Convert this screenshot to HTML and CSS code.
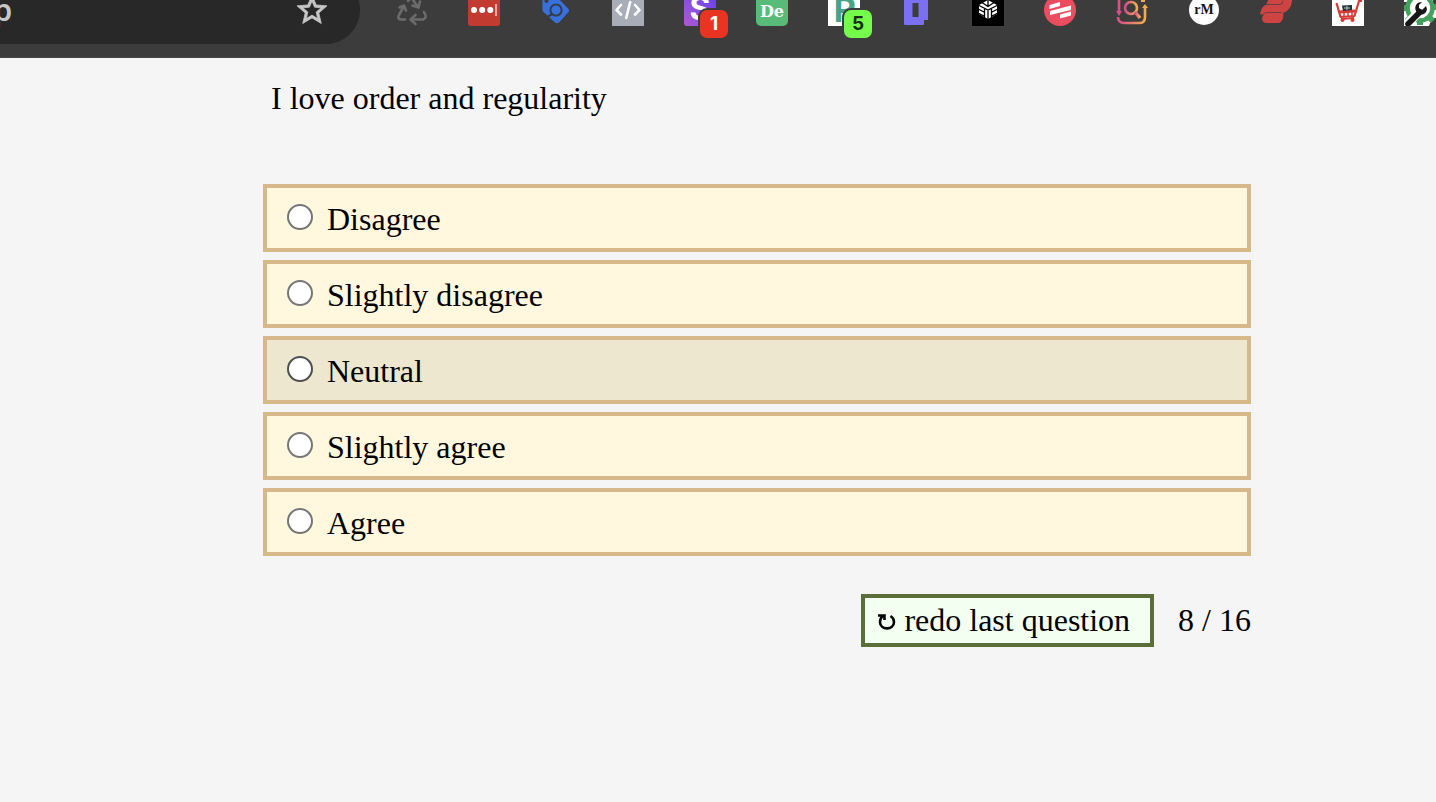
FILE: index.html
```html
<!DOCTYPE html>
<html lang="en">
<head>
<meta charset="utf-8">
<title>Questionnaire</title>
<link rel="stylesheet" href="styles.css">
</head>
<body>
<header class="toolbar">
  <div class="omnibox">
    <input class="address" type="text" value="p" aria-label="Address">
    <button class="bookmark" type="button" aria-label="Bookmark">
      <svg width="36" height="28" viewBox="0 8 36 28"><path transform="scale(1.5)" fill="#c7c7c7" stroke="#c7c7c7" stroke-width=".5" d="M22 9.24l-7.19-.62L12 2 9.19 8.63 2 9.24l5.46 4.73L5.82 21 12 17.27 18.18 21l-1.63-7.03L22 9.24zM12 15.4l-3.76 2.27 1-4.28-3.32-2.88 4.38-.38L12 6.1l1.71 4.04 4.38.38-3.32 2.88 1 4.28L12 15.4z"/></svg>
    </button>
  </div>
  <nav class="extensions" aria-label="Extensions">
    <button class="ext" type="button" aria-label="Recycle">
      <svg viewBox="0 6 32 26"><g fill="none" stroke="#6b6b6b" stroke-width="2.600" stroke-linejoin="round" stroke-linecap="round"><path d="M9 25.500H5Q1 25 3 21l5-9M3.500 13.500L8 11.500l2 5"/><path d="M15.500 25.500H27Q31 24 29 20l-1-2M19.500 21l-5 4.500 5 4.500"/><path d="M12 7l3-4 7 10M16.500 11.500l6 2 1.500-6"/></g></svg>
    </button>
    <button class="ext" type="button" aria-label="Passwords">
      <svg viewBox="0 6 32 26"><rect width="32" height="32" rx="3" fill="#c23b31"/><g fill="#fff"><circle cx="6" cy="16" r="3"/><circle cx="14.200" cy="16" r="3"/><circle cx="22.300" cy="16" r="3"/></g><path fill="#eba7a2" d="M27 10h2v12h-2z"/></svg>
    </button>
    <button class="ext" type="button" aria-label="Tags">
      <svg viewBox="0 6 32 26"><path fill="#3871dc" d="M3 2h13l12.500 13q1 2 0 3L19 28.500q-2 1.500-4 0L2.500 17V3z"/><circle cx="6.500" cy="7" r="2" fill="#3c3c3c"/><circle cx="16" cy="16" r="5.600" fill="none" stroke="#343d4b" stroke-width="2"/><path stroke="#343d4b" stroke-width="2.200" d="M12 20l-4 2.500"/></svg>
    </button>
    <button class="ext" type="button" aria-label="Code">
      <svg viewBox="0 6 32 26"><path fill="#a9adb8" d="M0 0h32v32H0z"/><path fill="none" stroke="#fff" stroke-width="2.600" stroke-linecap="round" stroke-linejoin="round" d="M9 11l-4.500 5L9 20.500M23 11l4.500 5-4.500 4.500M18.200 8l-4 16"/></svg>
    </button>
    <button class="ext" type="button" aria-label="S, 1 notification">
      <svg viewBox="0 6 32 26"><defs><linearGradient id="violet" x1="0" y1="1" x2="1" y2="0"><stop stop-color="#ae59cf"/><stop offset="1" stop-color="#6541ef"/></linearGradient></defs><rect width="32" height="32" rx="3" fill="url(#violet)"/><text class="glyph-s" x="16" y="26" text-anchor="middle">S</text></svg>
      <span class="badge badge-red">1</span>
    </button>
    <button class="ext" type="button" aria-label="De">
      <svg viewBox="0 6 32 26"><rect width="32" height="32" rx="5" fill="#58bb78"/><text class="glyph-de" x="16" y="23" text-anchor="middle">De</text></svg>
    </button>
    <button class="ext" type="button" aria-label="R, 5 notifications">
      <svg viewBox="0 6 32 26"><path fill="#fff" d="M0 0h32v32H0z"/><text class="glyph-r" x="17" y="28" text-anchor="middle">R</text></svg>
      <span class="badge badge-green">5</span>
    </button>
    <button class="ext" type="button" aria-label="D">
      <svg viewBox="0 6 32 26"><path fill="#7b70f4" fill-rule="evenodd" d="M4 0h21v6h3v20h-4v4q0 1-1 1H5q-1 0-1-1zM12.500 9v14h6V9z"/></svg>
    </button>
    <button class="ext" type="button" aria-label="Cube">
      <svg viewBox="0 6 32 26"><path d="M0 0h32v32H0z"/><path fill="#fff" d="M16 6l9 5v9l-9 5-9-5v-9z"/><path fill="none" stroke="#000" stroke-width="1.300" d="M16 5v8M16 16v10M6 11l10 5 10-5M10 8.500l6 4 6-4M12.500 15v9M19.500 15v9M6 15l6 3M26 15l-6 3M6 19l6 3M26 19l-6 3"/></svg>
    </button>
    <button class="ext" type="button" aria-label="Stripes">
      <svg viewBox="0 6 32 26"><circle cx="16" cy="16" r="16" fill="#ea4c60"/><path fill="#fff" d="M5.500 11L16 8v4L5.500 15zM6 17l21-5.500V16L6 21zM16 20.500L27 17.500v4L16 24.500z"/></svg>
    </button>
    <button class="ext" type="button" aria-label="Search">
      <svg viewBox="0 6 32 26"><defs><linearGradient id="sunset"><stop stop-color="#d94c88"/><stop offset="1" stop-color="#f1ad50"/></linearGradient></defs><g fill="none" stroke="url(#sunset)" stroke-width="2.600"><path d="M3 4v14.100M2 23q0 6 6 6h16q5 0 5-6V12"/><circle cx="15" cy="14" r="6"/><path stroke-width="3.500" d="M19 18l5 6"/></g><path fill="#d94c88" d="M0 17h6l-3 5z"/><path fill="#f1ad50" d="M26 14h6l-3-4zM25 5h4v3h-4z"/></svg>
    </button>
    <button class="ext" type="button" aria-label="rM">
      <svg viewBox="0 6 32 26"><circle cx="16" cy="16" r="15" fill="#fff"/><text class="glyph-rm" x="16" y="20" text-anchor="middle">rM</text></svg>
    </button>
    <button class="ext" type="button" aria-label="Ribbon">
      <svg viewBox="0 6 32 26"><path fill="#ce4443" d="M10 2h21q1 2 1 5-1 9-8 11.500-1.500.5-.5 2Q23 28 19 29H6q-4-1-4-4 0-3 2-4.500H1Q-.5 20 .5 18 2 12 6 11z"/><path fill="none" stroke="#6f3d3d" d="M6 10.500h14q3 0 3-4M3 20.500q1-2 4-2h15"/></svg>
    </button>
    <button class="ext" type="button" aria-label="Cart">
      <svg viewBox="0 6 32 26"><path fill="#fff" d="M0 0h32v32H0z"/><g fill="none" stroke="#d93a36" stroke-linejoin="round"><path stroke-width="2.200" d="M4.500 9l4 14 14-1L27 7h3"/><path stroke-width="3" d="M7 18l16-1"/><path stroke-width="1.500" d="M12 19v4M16 18v5M20 18v5"/><path stroke-width="2.200" d="M9 25l13-1"/></g><path fill="#253333" d="M10 11.500L20 11v5l-9 1z"/><path stroke="#b8c9c5" d="M12 14h6M15 12v4"/><circle cx="10.500" cy="26" r="2" fill="#d93a36"/><circle cx="20.500" cy="26" r="2" fill="#d93a36"/></svg>
    </button>
    <button class="ext" type="button" aria-label="Tools">
      <svg viewBox="0 6 32 26"><path fill="#fff" d="M0 0h32v32H0z"/><path fill="#3c3c3c" d="M0 8h3v4H0zM29 5h3v6h-3zM28 24h4v8h-7z"/><circle cx="16" cy="14" r="12.500" fill="none" stroke="#43a05d" stroke-width="4.500"/><path stroke="#43a05d" stroke-width="6" d="M16 14m12-1h5M25 23l4 4M16 26v5M7 23l-4 4M4 14H0M24 6l3-4M8 6L5 3"/><path stroke="#fff" stroke-width="9" d="M0 33l14-14"/><path stroke="#161616" stroke-width="5.600" stroke-linecap="round" d="M4 30l12-12"/><path fill="#161616" d="M18 8c-6 0-8 5-6 9 2 5 10 5 11-2l-1-3-4 4-3-2v-3z"/></svg>
    </button>
  </nav>
</header>
<main class="quiz">
  <form>
    <fieldset class="question">
      <legend class="prompt">I love order and regularity</legend>
      <label class="option"><input class="radio" type="radio" name="answer"><span>Disagree</span></label>
      <label class="option"><input class="radio" type="radio" name="answer"><span>Slightly disagree</span></label>
      <label class="option option-active"><input class="radio" type="radio" name="answer"><span>Neutral</span></label>
      <label class="option"><input class="radio" type="radio" name="answer"><span>Slightly agree</span></label>
      <label class="option"><input class="radio" type="radio" name="answer"><span>Agree</span></label>
    </fieldset>
    <div class="actions">
      <button class="redo" type="button">
        <svg width="18" height="16" viewBox="0 1 18 16" aria-hidden="true"><path fill="none" stroke="#000" stroke-width="2.600" d="M0 2.500h6.500V7M5 3Q2 5 2 9c0 8.500 14 8.500 14 0 0-3-1-4.500-3.500-6"/></svg>
        <span>redo last question</span>
      </button>
      <span class="progress">8 / 16</span>
    </div>
  </form>
</main>
</body>
</html>
```
FILE: styles.css
```css
* {
  box-sizing: border-box;
}

body {
  margin: 0;
  background: #f5f5f5;
  color: #000;
  font-family: "Liberation Serif", "Times New Roman", serif;
  font-size: 32px;
  line-height: 36px;
}

button,
input {
  margin: 0;
  padding: 0;
  border: 0;
  background: none;
  color: inherit;
  font: inherit;
}

.toolbar {
  display: flex;
  height: 58px;
  overflow: hidden;
  background: #3c3c3c;
  border-bottom: 1px solid #484646;
}

.omnibox {
  display: flex;
  flex: none;
  align-items: flex-start;
  width: 360px;
  height: 68px;
  margin: -24px 36px 0 0;
  padding: 24px 30px 0 0;
  border-radius: 0 34px 34px 0;
  background: #282828;
}

.address {
  flex: 1;
  min-width: 0;
  height: 36px;
  margin-top: -8px;
  color: #c7c7c7;
  font-family: Roboto, sans-serif;
  font-weight: 500;
  text-indent: -6px;
}

.bookmark {
  height: 28px;
}

svg {
  display: block;
}

.extensions {
  display: flex;
  flex: none;
  align-items: flex-start;
  gap: 40px;
}

.ext {
  position: relative;
  flex: none;
  width: 32px;
  height: 26px;
}

.ext svg {
  width: 32px;
  height: 26px;
}

.badge {
  position: absolute;
  top: 10px;
  left: 16px;
  width: 28px;
  height: 28px;
  border-radius: 7px;
  box-shadow: 0 0 0 2px #3c3c3c;
  font: bold 19px/28px Inter, sans-serif;
  text-align: center;
}

.badge-red {
  background: #e93323;
  color: #fff;
}

.badge-green {
  background: #75fb4c;
  color: #182c12;
}

.glyph-s {
  fill: #fff;
  font: bold 32px Inter, sans-serif;
}

.glyph-de {
  fill: #fff;
  font: bold 16px "DejaVu Serif", serif;
}

.glyph-r {
  fill: #45a389;
  font: bold 34px Inter, sans-serif;
}

.glyph-rm {
  fill: #151515;
  font: bold 14px "Liberation Serif", serif;
}

.quiz {
  padding: 22px 185px 40px 263px;
}

.question {
  display: flex;
  flex-direction: column;
  gap: 8px;
  min-width: 0;
  margin: 0;
  padding: 0;
  border: 0;
}

.prompt {
  padding: 0 8px 68px;
}

.option {
  display: flex;
  align-items: center;
  gap: 14px;
  height: 68px;
  padding: 0 20px;
  border: 4px solid #d7b88a;
  background: #fff7de;
}

.option-active {
  background: #eee7cf;
}

.radio {
  appearance: none;
  flex: none;
  width: 26px;
  height: 26px;
  margin-bottom: 2px;
  border: 2px solid #767676;
  border-radius: 50%;
  background: #fff;
}

.option-active .radio {
  border-color: #4f4f4f;
}

.option span {
  padding-top: 2px;
}

.actions {
  display: flex;
  align-items: center;
  justify-content: flex-end;
  gap: 24px;
  margin-top: 38px;
}

.redo {
  display: flex;
  align-items: center;
  gap: 8px;
  height: 53px;
  padding: 0 20px 2px 13px;
  border: 4px solid #5b6d38;
  background: #f3fff1;
}

.redo svg {
  margin-top: 4px;
}

.progress {
  padding-bottom: 2px;
}
```
